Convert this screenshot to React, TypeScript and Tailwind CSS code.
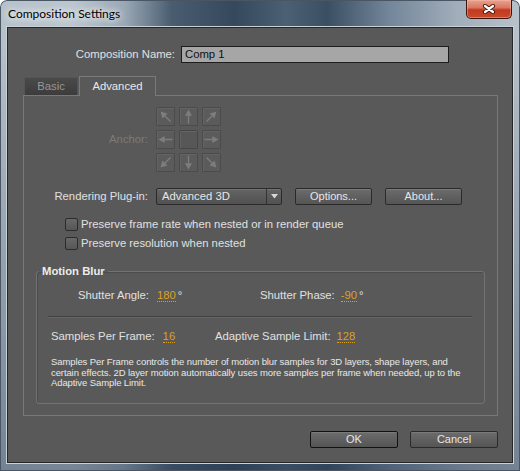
import React from "react";

const btn =
  "h-[17px] rounded-[2px] border border-[#2a2a2a] bg-[linear-gradient(180deg,#6c6c6c_0%,#606060_50%,#555555_100%)] shadow-[inset_0_1px_0_#7a7a7a] text-[11px] leading-[15px] text-[#e6e6e6] flex items-center justify-center";

function Arrow({ angle }: { angle: number }) {
  return (
    <svg width="17" height="17" viewBox="0 0 17 17">
      <g transform={`rotate(${angle} 8.5 8.5)`}>
        <line x1="1.5" y1="8.5" x2="11" y2="8.5" stroke="#7d7d7d" strokeWidth="1.3" />
        <polygon points="15.5,8.5 9.3,5 9.3,12" fill="#7d7d7d" />
      </g>
    </svg>
  );
}

function Cell({ angle }: { angle?: number }) {
  return (
    <div
      className={
        "w-[19px] h-[19px] rounded-[1px] border flex items-center justify-center shadow-[inset_1px_1px_0_#636363] " +
        (angle === undefined ? "border-[#464646] bg-[#575757]" : "border-[#4b4b4b] bg-[#5b5b5b]")
      }
    >
      {angle !== undefined && <Arrow angle={angle} />}
    </div>
  );
}

function Val({ children, className }: { children: React.ReactNode; className?: string }) {
  return (
    <span
      className={
        "text-[#d9a21e] leading-[12px] border-b border-dotted border-[#d9a21e] " + (className ?? "")
      }
    >
      {children}
    </span>
  );
}

function Check({ label }: { label: string }) {
  return (
    <div className="flex items-center h-[19px]">
      <div className="w-[13px] h-[13px] rounded-[2px] border border-[#2b2b2b] bg-[linear-gradient(180deg,#686868_0%,#565656_100%)]" />
      <span className="ml-[3px] text-[#e0e0e0]">{label}</span>
    </div>
  );
}

export default function App() {
  return (
    <div className="w-[520px] h-[471px] flex flex-col overflow-hidden rounded-t-[7px] shadow-[inset_0_0_0_1px_#4a5663] bg-[linear-gradient(180deg,rgba(0,0,0,0)_0%,rgba(0,0,0,0)_7%,rgba(35,55,80,0.45)_100%),linear-gradient(90deg,#b6c1cb_0%,#bcc6cf_14%,#9aa8b6_24%,#4a5d70_33%,#35485c_45%,#4b6073_55%,#3b4f63_63%,#74869a_75%,#a1aebb_88%,#b7c2cb_100%)] font-['Liberation_Sans',Arial,sans-serif]">
      {/* title bar */}
      <div className="h-[26px] shrink-0 flex items-start justify-between pl-[8px] pr-[8px]">
        <span className="mt-[6px] text-[12px] leading-[16px] text-black font-['Lato',sans-serif] [text-shadow:0_0_6px_#ffffff,0_0_10px_#ffffff]">
          Composition Settings
        </span>
        <div className="w-[46px] h-[19px] rounded-b-[5px] border border-t-0 border-[#3b1710] bg-[linear-gradient(180deg,#e8a391_0%,#d97862_42%,#c23a1f_55%,#c9482b_100%)] shadow-[inset_0_0_0_1px_rgba(255,190,175,0.45)] flex items-center justify-center">
          <svg width="14" height="10" viewBox="0 0 14 10">
            <path d="M3 2 L11 8 M11 2 L3 8" stroke="#4a1c12" strokeWidth="4.2" strokeLinecap="round" />
            <path d="M3 2 L11 8 M11 2 L3 8" stroke="#ffffff" strokeWidth="2.2" strokeLinecap="round" />
          </svg>
        </div>
      </div>

      {/* frame */}
      <div className="mx-[6px] mb-[7px] flex-1 flex border border-[#c9d1d9]">
        <div className="flex-1 flex flex-col border border-[#262626] bg-[#595959] text-[11.3px] text-[#e0e0e0]">
          {/* name row */}
          <div className="flex items-center mt-[18px] h-[17px]">
            <div className="w-[167px] text-right">Composition Name:</div>
            <div className="ml-[6px] w-[268px] h-[17px] bg-[#a6a6a6] border border-[#1c1c1c] pl-[3px] leading-[15px] text-[#111111]">
              Comp 1
            </div>
          </div>

          {/* tabs */}
          <div className="ml-[15px] mt-[13px] w-[475px] flex flex-col">
            <div className="flex items-end h-[19px]">
              <div className="ml-[1px] w-[54px] h-[18px] border border-b-0 border-[#555555] bg-[linear-gradient(180deg,#4a4a4a_0%,#3c3c3c_100%)] flex items-center justify-center text-[#979797]">
                Basic
              </div>
              <div className="relative z-10 -mb-px ml-[1px] w-[77px] h-[20px] border border-b-0 border-[#7a7a7a] bg-[#595959] flex items-center justify-center text-[#e8e8e8]">
                Advanced
              </div>
            </div>
            <div className="h-[321px] border border-[#787878] flex flex-col">
              {/* anchor */}
              <div className="flex mt-[11px]">
                <div className="w-[124px] flex items-center justify-end text-[#7b7b7b]">Anchor:</div>
                <div className="ml-[8px] grid grid-cols-3 gap-[4px]">
                  <Cell angle={-135} />
                  <Cell angle={-90} />
                  <Cell angle={-45} />
                  <Cell angle={180} />
                  <Cell />
                  <Cell angle={0} />
                  <Cell angle={135} />
                  <Cell angle={90} />
                  <Cell angle={45} />
                </div>
              </div>

              {/* rendering plug-in */}
              <div className="flex items-center mt-[16px] h-[17px]">
                <div className="w-[124px] text-right">Rendering Plug-in:</div>
                <div className="ml-[8px] w-[126px] h-[17px] rounded-[2px] border border-[#2a2a2a] bg-[linear-gradient(180deg,#656565_0%,#5a5a5a_50%,#525252_100%)] shadow-[inset_0_1px_0_#727272] flex items-center">
                  <span className="flex-1 pl-[5px] leading-[15px] text-[#e6e6e6]">Advanced 3D</span>
                  <div className="w-[15px] h-full border-l border-[#333333] flex items-center justify-center">
                    <svg width="7" height="5" viewBox="0 0 7 5">
                      <polygon points="0,0 7,0 3.5,4.5" fill="#d8d8d8" />
                    </svg>
                  </div>
                </div>
                <div className={"ml-[13px] w-[77px] " + btn}>Options...</div>
                <div className={"ml-[13px] w-[77px] " + btn}>About...</div>
              </div>

              {/* checkboxes */}
              <div className="flex flex-col pl-[41px] mt-[10px]">
                <Check label="Preserve frame rate when nested or in render queue" />
                <Check label="Preserve resolution when nested" />
              </div>

              {/* motion blur */}
              <fieldset className="ml-[12px] mt-[12px] w-[449px] h-[139px] border border-[#727272] rounded-[3px] shadow-[inset_1px_1px_0_#4c4c4c]">
                <legend className="ml-[2px] px-[3px] font-bold leading-[13px] text-[#ececec]">Motion Blur</legend>
                <div className="flex items-center mt-[11px] h-[13px] pl-[41px]">
                  <div className="w-[182px] flex items-center">
                    <span>Shutter Angle:</span>
                    <Val className="ml-[8px]">180</Val>
                    <span className="ml-[2px]">°</span>
                  </div>
                  <span>Shutter Phase:</span>
                  <Val className="ml-[6px]">-90</Val>
                  <span className="ml-[2px]">°</span>
                </div>
                <div className="ml-[11px] mt-[14px] w-[424px] h-px bg-[#434343] shadow-[0_1px_0_#646464]" />
                <div className="flex items-center mt-[13px] h-[13px] pl-[14px]">
                  <div className="w-[164px] flex items-center">
                    <span>Samples Per Frame:</span>
                    <Val className="ml-[8px]">16</Val>
                  </div>
                  <span>Adaptive Sample Limit:</span>
                  <Val className="ml-[6px]">128</Val>
                </div>
                <p className="mt-[14px] pl-[14px] text-[9.5px] tracking-[-0.1px] leading-[10.6px] text-[#e8e8e8] whitespace-nowrap">
                  Samples Per Frame controls the number of motion blur samples for 3D layers, shape layers, and
                  <br />
                  certain effects. 2D layer motion automatically uses more samples per frame when needed, up to the
                  <br />
                  Adaptive Sample Limit.
                </p>
              </fieldset>
            </div>
          </div>

          {/* bottom buttons */}
          <div className="flex justify-end mt-[15px] pr-[14px] gap-[12px]">
            <div className={"w-[88px] border-[#121212] shadow-[inset_0_1px_0_#7a7a7a,0_0_0_1px_#3a3a3a] " + btn}>OK</div>
            <div className={"w-[88px] " + btn}>Cancel</div>
          </div>
        </div>
      </div>
    </div>
  );
}
